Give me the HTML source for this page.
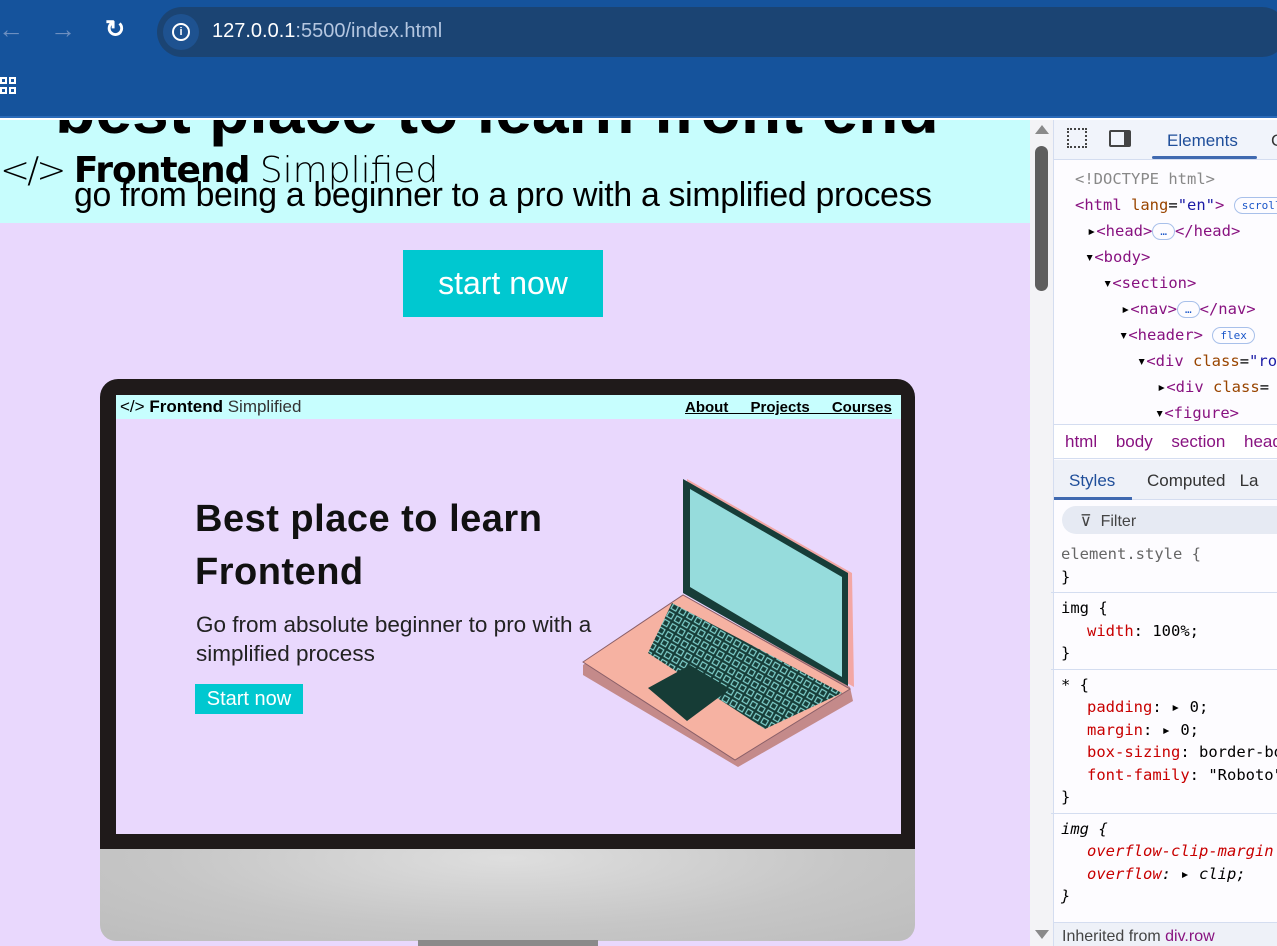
<!DOCTYPE html>
<html><head><meta charset="utf-8"><style>
*{margin:0;padding:0;box-sizing:border-box}
body{width:1277px;height:946px;overflow:hidden;position:relative;font-family:"Liberation Sans",sans-serif;background:#fff}
.abs{position:absolute}
.mono{font-family:"DejaVu Sans Mono","Liberation Mono",monospace;font-size:15.5px;white-space:nowrap}
.tag{color:#881280}.attr{color:#994500}.val{color:#1a1aa6}
.pill{display:inline-block;border:1px solid #a8c0ea;border-radius:9px;font-size:11px;color:#1a56c9;padding:0 7px;line-height:15px;vertical-align:middle}
</style></head><body>
<!-- browser chrome -->
<div class="abs" style="left:0;top:0;width:1277px;height:118px;background:#15539c;border-bottom:2px solid #2a6ab8"></div>
<div class="abs" style="left:-2px;top:14px;font-size:26px;color:#6d8fc0">←</div>
<div class="abs" style="left:50px;top:14px;font-size:26px;color:#6d8fc0">→</div>
<div class="abs" style="left:105px;top:15px;font-size:24px;color:#fff;font-weight:bold">↻</div>
<div class="abs" style="left:157px;top:7px;width:1130px;height:50px;border-radius:25px;background:#1b4473"></div>
<div class="abs" style="left:163px;top:14px;width:36px;height:36px;border-radius:18px;background:#1e5290"></div>
<div class="abs" style="left:172px;top:23px;width:18px;height:18px;border:2px solid #fff;border-radius:9px;color:#fff;font-size:11px;font-weight:bold;text-align:center;line-height:14px">i</div>
<div class="abs" style="left:212px;top:20px;font-size:20px;color:#fff">127.0.0.1<span style="color:#b4c6e0">:5500/index.html</span></div>
<div class="abs" style="left:0;top:77px;width:17px;height:20px">
<div class="abs" style="left:0;top:0;width:7px;height:7px;border:2px solid #fff"></div><div class="abs" style="left:9px;top:0;width:7px;height:7px;border:2px solid #fff"></div>
<div class="abs" style="left:0;top:10px;width:7px;height:7px;border:2px solid #fff"></div><div class="abs" style="left:9px;top:10px;width:7px;height:7px;border:2px solid #fff"></div></div>

<!-- page -->
<div class="abs" style="left:0;top:120px;width:1030px;height:826px;background:#e9d8fd;overflow:hidden">
<div class="abs" style="left:0;top:0;width:1030px;height:103px;background:#c7fdfd"></div>
<div class="abs" style="left:55px;top:-48px;font-size:66px;font-weight:bold;white-space:nowrap;letter-spacing:0px">best place to learn front end</div>
<div class="abs" style="left:0;top:30px;font-size:36px;white-space:nowrap;font-family:'DejaVu Sans',sans-serif;letter-spacing:-1px"><span style="font-weight:200;letter-spacing:-3px">&lt;/&gt;</span> <b>Frontend</b> <span style="font-weight:200;letter-spacing:0">Simplified</span></div>
<div class="abs" style="left:74px;top:56px;font-size:33.8px;white-space:nowrap;letter-spacing:-0.3px">go from being a beginner to a pro with a simplified process</div>
<div class="abs" style="left:403px;top:130px;width:200px;height:67px;background:#00c8d0;color:#fff;font-size:32px;text-align:center;line-height:67px">start now</div>
<!-- monitor -->
<div class="abs" style="left:100px;top:259px;width:815px;height:470px;background:#1f1a1a;border-radius:18px 18px 0 0"></div>
<div class="abs" style="left:116px;top:275px;width:785px;height:439px;background:#e9d8fd"></div>
<div class="abs" style="left:116px;top:275px;width:785px;height:24px;background:#c7fefe"></div>
<div class="abs" style="left:120px;top:277px;font-size:17px;white-space:nowrap">&lt;/&gt; <b>Frontend</b> <span style="color:#333">Simplified</span></div>
<div class="abs" style="left:685px;top:279px;font-size:15px;font-weight:bold;text-decoration:underline;white-space:nowrap;word-spacing:18px">About Projects Courses</div>
<div class="abs" style="left:195px;top:373px;font-size:38px;font-weight:bold;line-height:53px;color:#111;white-space:nowrap;letter-spacing:0.5px">Best place to learn<br>Frontend</div>
<div class="abs" style="left:196px;top:490px;font-size:22.5px;line-height:29px;color:#222;white-space:nowrap">Go from absolute beginner to pro with a<br>simplified process</div>
<div class="abs" style="left:195px;top:564px;width:108px;height:30px;background:#00c8d0;color:#fff;font-size:20px;text-align:center;line-height:30px">Start now</div>
<svg class="abs" style="left:580px;top:355px" width="280" height="295" viewBox="0 0 280 295">
<defs><pattern id="k" width="9" height="9" patternUnits="userSpaceOnUse" patternTransform="rotate(30)"><rect width="9" height="9" fill="#173d38"/><rect x="1.5" y="1.5" width="5.5" height="5.5" fill="none" stroke="#7fcfcb" stroke-width="1.2"/></pattern></defs>
<polygon points="107,4 272,98 274,212 107,118" fill="#f3a7a4"/>
<polygon points="103,4 268,98 268,212 103,118" fill="#173d38"/>
<polygon points="110,14 262,102 262,202 110,112" fill="#96dcdc"/>
<polygon points="3,190 103,120 270,212 273,226 158,292 3,200" fill="#c48a8a"/>
<polygon points="3,187 103,120 270,214 155,285" fill="#f6b2a2" stroke="#8a5f68" stroke-width="1"/>
<polygon points="92,128 262,218 185,254 68,178" fill="url(#k)"/>
<polygon points="68,213 110,190 150,214 107,246" fill="#163c36"/>
</svg>
<div class="abs" style="left:100px;top:729px;width:815px;height:92px;border-radius:0 0 16px 16px;background:radial-gradient(ellipse at 50% 10%,#dedede,#c6c6c6 60%,#bdbdbd)"></div>
<div class="abs" style="left:418px;top:820px;width:180px;height:6px;background:#8a8a8a"></div>
</div>

<!-- devtools -->
<div class="abs" style="left:1030px;top:120px;width:24px;height:826px;background:#f3f3f6;border-right:1px solid #d4ddf0"></div>
<div class="abs" style="left:1035px;top:125px;width:0;height:0;border-left:7px solid transparent;border-right:7px solid transparent;border-bottom:9px solid #8a8a8a"></div>
<div class="abs" style="left:1035px;top:146px;width:13px;height:145px;border-radius:7px;background:#5e5e5e"></div>
<div class="abs" style="left:1035px;top:930px;width:0;height:0;border-left:7px solid transparent;border-right:7px solid transparent;border-top:9px solid #8a8a8a"></div>
<div class="abs" style="left:1054px;top:120px;width:223px;height:826px;background:#fdfcff"></div>
<div class="abs" style="left:1054px;top:120px;width:223px;height:40px;background:#f1f4fb;border-bottom:1px solid #d4ddf0"></div>
<div class="abs" style="left:1067px;top:128px;width:20px;height:20px;border:2px dotted #444"></div>
<div class="abs" style="left:1109px;top:130px;width:22px;height:17px;border:2px solid #444;border-radius:2px;border-right-width:7px"></div>
<div class="abs" style="left:1167px;top:131px;font-size:17px;color:#1f4e9a">Elements</div>
<div class="abs" style="left:1152px;top:156px;width:105px;height:3px;background:#3f69b0;border-radius:2px"></div>
<div class="abs" style="left:1271px;top:131px;font-size:17px;color:#333">C</div>
<div class="abs mono" style="left:1075px;top:166px;line-height:26px">
<div style="color:#888">&lt;!DOCTYPE html&gt;</div>
<div><span class="tag">&lt;html</span> <span class="attr">lang</span>=<span class="val">"en"</span><span class="tag">&gt;</span> <span class="pill">scroll</span></div>
<div style="padding-left:12px">▸<span class="tag">&lt;head&gt;</span><span class="pill">…</span><span class="tag">&lt;/head&gt;</span></div>
<div style="padding-left:10px">▾<span class="tag">&lt;body&gt;</span></div>
<div style="padding-left:28px">▾<span class="tag">&lt;section&gt;</span></div>
<div style="padding-left:46px">▸<span class="tag">&lt;nav&gt;</span><span class="pill">…</span><span class="tag">&lt;/nav&gt;</span></div>
<div style="padding-left:44px">▾<span class="tag">&lt;header&gt;</span> <span class="pill">flex</span></div>
<div style="padding-left:62px">▾<span class="tag">&lt;div</span> <span class="attr">class</span>=<span class="val">"row"</span></div>
<div style="padding-left:82px">▸<span class="tag">&lt;div</span> <span class="attr">class</span>=</div>
<div style="padding-left:80px">▾<span class="tag">&lt;figure&gt;</span></div>
</div>
<div class="abs" style="left:1054px;top:424px;width:223px;height:35px;border-top:1px solid #d4ddf0;border-bottom:1px solid #d4ddf0;background:#fff"></div>
<div class="abs" style="left:1065px;top:432px;font-size:17px;color:#881280;white-space:nowrap;word-spacing:14px">html body section header</div>
<div class="abs" style="left:1054px;top:460px;width:223px;height:40px;background:#eef1f8;border-bottom:1px solid #d4ddf0"></div>
<div class="abs" style="left:1069px;top:471px;font-size:17px;color:#1f4e9a">Styles</div>
<div class="abs" style="left:1147px;top:471px;font-size:17px;color:#333;white-space:nowrap">Computed&nbsp;&nbsp;&nbsp;La</div>
<div class="abs" style="left:1054px;top:497px;width:78px;height:3px;background:#3f69b0"></div>
<div class="abs" style="left:1062px;top:506px;width:230px;height:28px;border-radius:14px;background:#e6eaf3"></div>
<div class="abs" style="left:1080px;top:511px;font-size:16px;color:#444">⊽&nbsp; Filter</div>
<div class="abs mono" style="left:1061px;top:543px;line-height:22.5px;width:216px">
<div style="color:#666">element.style {</div><div>}</div>
<div style="border-top:1px solid #d4ddf0;margin:4px -10px 0;padding:4px 10px 0">img {</div>
<div style="padding-left:26px"><span style="color:#c80000">width</span>: 100%;</div><div>}</div>
<div style="border-top:1px solid #d4ddf0;margin:4px -10px 0;padding:4px 10px 0">* {</div>
<div style="padding-left:26px"><span style="color:#c80000">padding</span>: ▸ 0;</div>
<div style="padding-left:26px"><span style="color:#c80000">margin</span>: ▸ 0;</div>
<div style="padding-left:26px"><span style="color:#c80000">box-sizing</span>: border-box;</div>
<div style="padding-left:26px"><span style="color:#c80000">font-family</span>: "Roboto";</div><div>}</div>
<div style="border-top:1px solid #d4ddf0;margin:4px -10px 0;padding:4px 10px 0;font-style:italic">img {</div>
<div style="padding-left:26px;font-style:italic"><span style="color:#c80000">overflow-clip-margin</span></div>
<div style="padding-left:26px;font-style:italic"><span style="color:#c80000">overflow</span>: ▸ clip;</div><div style="font-style:italic">}</div>
</div>
<div class="abs" style="left:1054px;top:922px;width:223px;height:24px;background:#eef1f8;border-top:1px solid #d4ddf0"></div>
<div class="abs" style="left:1062px;top:928px;font-size:16px;color:#444;white-space:nowrap">Inherited from <span style="color:#881280">div.row</span></div>
</body></html>
